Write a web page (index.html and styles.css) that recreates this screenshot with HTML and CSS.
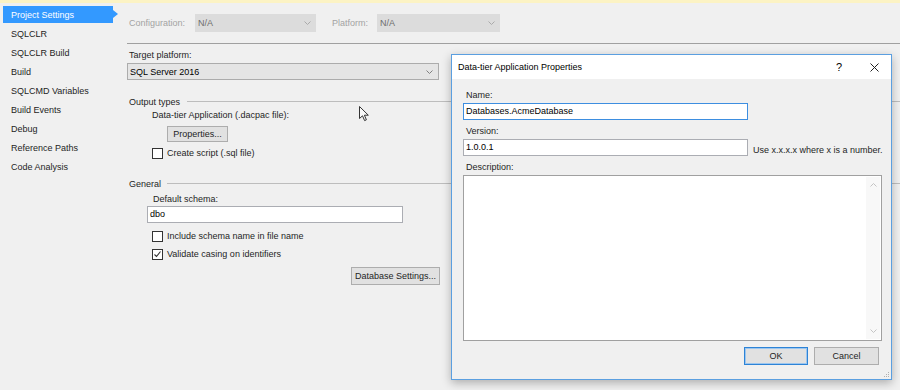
FILE: index.html
```html
<!DOCTYPE html>
<html lang="en">
  <head>
    <meta charset="UTF-8" />
    <title>Project Settings</title>
    <link rel="stylesheet" href="styles.css">
  </head>
  <body>
    <div class="infobar"></div>
    <div class="page">
      <div class="nav">
        <div class="nav-item selected">Project Settings</div>
        <div class="nav-item">SQLCLR</div>
        <div class="nav-item">SQLCLR Build</div>
        <div class="nav-item">Build</div>
        <div class="nav-item">SQLCMD Variables</div>
        <div class="nav-item">Build Events</div>
        <div class="nav-item">Debug</div>
        <div class="nav-item">Reference Paths</div>
        <div class="nav-item">Code Analysis</div>
      </div>

      <div class="main">
        <div class="config-row">
          <span class="muted config-label">Configuration:</span>
          <div class="select disabled config-select">
            <span>N/A</span>
            <svg width="7" height="4" viewBox="0 0 7 4"><polyline points="0.5,0.5 3.5,3.5 6.5,0.5" fill="none" stroke="#aaa"/></svg>
          </div>
          <span class="muted platform-label">Platform:</span>
          <div class="select disabled platform-select">
            <span>N/A</span>
            <svg width="7" height="4" viewBox="0 0 7 4"><polyline points="0.5,0.5 3.5,3.5 6.5,0.5" fill="none" stroke="#aaa"/></svg>
          </div>
        </div>
        <div class="rule"></div>

        <div class="field-label">Target platform:</div>
        <div class="select target-select">
          <span>SQL Server 2016</span>
          <svg width="7" height="4" viewBox="0 0 7 4"><polyline points="0.5,0.5 3.5,3.5 6.5,0.5" fill="none" stroke="#808080"/></svg>
        </div>

        <div class="group-head output-head"><span>Output types</span><div class="group-line"></div></div>
        <div class="sub-label">Data-tier Application (.dacpac file):</div>
        <button class="btn btn-props">Properties...</button>
        <div class="check-row row-script">
          <div class="check"></div><span>Create script (.sql file)</span>
        </div>

        <div class="group-head general-head"><span>General</span><div class="group-line"></div></div>
        <div class="sub-label schema-label">Default schema:</div>
        <div class="text-input schema-input">dbo</div>
        <div class="check-row row-include">
          <div class="check"></div><span>Include schema name in file name</span>
        </div>
        <div class="check-row row-validate">
          <div class="check">
            <svg width="9" height="9" viewBox="0 0 9 9"><polyline points="1.5,4.5 3.5,6.5 7.5,1.5" fill="none" stroke="#333" stroke-width="1.1"/></svg>
          </div><span>Validate casing on identifiers</span>
        </div>
        <button class="btn btn-db">Database Settings...</button>
      </div>
    </div>

    <div class="dialog">
      <div class="dialog-title">
        <span>Data-tier Application Properties</span>
        <span class="help">?</span>
        <svg class="close" width="9" height="9" viewBox="0 0 9 9"><path d="M0.5 0.5L8.5 8.5M8.5 0.5L0.5 8.5" stroke="#222" stroke-width="1"/></svg>
      </div>
      <div class="dialog-body">
        <div class="dlg-label">Name:</div>
        <div class="dlg-input focus">Databases.AcmeDatabase</div>
        <div class="dlg-label gap">Version:</div>
        <div class="version-row">
          <div class="dlg-input">1.0.0.1</div>
          <span class="hint">Use x.x.x.x where x is a number.</span>
        </div>
        <div class="dlg-label gap">Description:</div>
        <div class="textarea">
          <div class="textarea-text"></div>
          <div class="scroll">
            <svg width="7" height="4" viewBox="0 0 7 4"><polyline points="0.5,3.5 3.5,0.5 6.5,3.5" fill="none" stroke="#c4c4c4"/></svg>
            <svg width="7" height="4" viewBox="0 0 7 4"><polyline points="0.5,0.5 3.5,3.5 6.5,0.5" fill="none" stroke="#c4c4c4"/></svg>
          </div>
        </div>
        <div class="dlg-buttons">
          <button class="btn btn-ok">OK</button>
          <button class="btn btn-cancel">Cancel</button>
        </div>
      </div>
      <svg class="grip" width="7" height="7" viewBox="0 0 7 7">
        <rect x="5" y="1" width="1" height="1" fill="#b0b0b0"/>
        <rect x="3" y="3" width="1" height="1" fill="#b0b0b0"/>
        <rect x="5" y="3" width="1" height="1" fill="#b0b0b0"/>
        <rect x="1" y="5" width="1" height="1" fill="#b0b0b0"/>
        <rect x="3" y="5" width="1" height="1" fill="#b0b0b0"/>
        <rect x="5" y="5" width="1" height="1" fill="#b0b0b0"/>
      </svg>
    </div>

    <svg class="cursor" width="11" height="16" viewBox="0 0 11 16">
      <path d="M0.5 0.5 L0.5 12.5 L3.5 9.8 L5.6 14.6 L7.4 13.8 L5.4 9.2 L9.3 9.2 Z" fill="#fafafa" stroke="#333" stroke-width="1" stroke-linejoin="round"/>
    </svg>
  </body>
</html>
```

FILE: styles.css
```css
* {
  box-sizing: border-box;
}

body {
  margin: 0;
  width: 900px;
  height: 390px;
  overflow: hidden;
  position: relative;
  background: #f0f0f0;
  font-family: "Liberation Sans", Arial, sans-serif;
  font-size: 9px;
  color: #1e1e1e;
}

.infobar {
  height: 3px;
  background: #fcf3c4;
}

.page {
  display: flex;
  height: 387px;
}

/* left navigation */
.nav {
  width: 120px;
  flex-shrink: 0;
  padding-top: 3px;
}
.nav-item {
  height: 17px;
  line-height: 18px;
  margin: 0 7px 2px 3px;
  padding-left: 8px;
  white-space: nowrap;
}
.nav-item.selected {
  position: relative;
  background: #3399ff;
  color: #fff;
}
.nav-item.selected::after {
  content: "";
  position: absolute;
  left: 100%;
  top: 4px;
  border-top: 4.5px solid transparent;
  border-bottom: 4.5px solid transparent;
  border-left: 5px solid #3399ff;
}

/* main settings */
.main {
  flex: 1;
  padding-left: 7px;
  display: flex;
  flex-direction: column;
  align-items: flex-start;
}

.muted {
  color: #a3a3a3;
}

.config-row {
  display: flex;
  align-items: center;
  height: 18px;
  margin-top: 11px;
}
.config-label {
  width: 68px;
  padding-left: 2px;
}
.platform-label {
  width: 45px;
  margin-left: 16px;
}

.select {
  display: flex;
  align-items: center;
  justify-content: space-between;
  height: 18px;
  padding: 0 5px 0 3px;
}
.select.disabled {
  background: #dcdcdc;
  color: #6d6d6d;
}
.config-select {
  width: 121px;
}
.platform-select {
  width: 123px;
}

.rule {
  align-self: stretch;
  height: 1px;
  margin-top: 11px;
  background: #a0a0a0;
}

.field-label {
  line-height: 12px;
  padding-left: 2px;
  margin-top: 5px;
}

.target-select {
  width: 312px;
  height: 17px;
  margin-top: 2px;
  background: #e5e5e5;
  border: 1px solid #acacac;
  padding-left: 2px;
  color: #000;
}

.group-head {
  align-self: stretch;
  display: flex;
  align-items: center;
  gap: 7px;
  line-height: 12px;
  padding-left: 2px;
}
.output-head {
  margin-top: 16px;
}
.general-head {
  margin-top: 19px;
  gap: 6px;
}
.group-line {
  flex: 1;
  height: 1px;
  margin-top: -1px;
  background: #bdbdbd;
}

.sub-label {
  line-height: 12px;
  margin-left: 25px;
  margin-top: 1px;
}
.schema-label {
  margin-left: 26px;
  margin-top: 3px;
}

.btn {
  height: 16px;
  padding: 0;
  background: #e1e1e1;
  border: 1px solid #adadad;
  font: inherit;
  color: #1e1e1e;
  text-align: center;
}
.btn-props {
  width: 61px;
  margin-left: 40px;
  margin-top: 5px;
}
.btn-db {
  width: 89px;
  height: 18px;
  margin-left: 224px;
  margin-top: 7px;
}

.check-row {
  display: flex;
  align-items: center;
  gap: 4px;
  line-height: 12px;
  margin-left: 25px;
}
.row-script {
  margin-top: 5px;
}
.row-include {
  margin-top: 7px;
}
.row-validate {
  margin-top: 6px;
}
.check {
  width: 11px;
  height: 11px;
  background: #fff;
  border: 1px solid #333;
  display: flex;
  align-items: center;
  justify-content: center;
}

.text-input {
  height: 17px;
  line-height: 15px;
  padding-left: 2px;
  background: #fff;
  border: 1px solid #abadb3;
  color: #000;
}
.schema-input {
  width: 256px;
  margin-left: 20px;
  margin-top: 1px;
}

/* modal dialog */
.dialog {
  position: absolute;
  left: 451px;
  top: 54px;
  width: 441px;
  height: 326px;
  display: flex;
  flex-direction: column;
  background: #f0f0f0;
  border: 1px solid #5b9fe0;
  box-shadow: 0 3px 9px rgba(0, 0, 0, 0.28);
}

.dialog-title {
  height: 24px;
  display: flex;
  align-items: center;
  padding-left: 6px;
  background: #fff;
  color: #000;
}
.help {
  margin-left: auto;
  font-size: 11px;
}
.close {
  margin-left: 28px;
  margin-right: 12px;
}

.dialog-body {
  flex: 1;
  display: flex;
  flex-direction: column;
  padding: 10px 9px 0 11px;
}
.dlg-label {
  line-height: 12px;
  padding-left: 3px;
}
.dlg-label.gap {
  margin-top: 5px;
}
.dlg-input {
  flex-shrink: 0;
  width: 285px;
  height: 17px;
  line-height: 15px;
  margin-top: 2px;
  padding-left: 2px;
  background: #fff;
  border: 1px solid #abadb3;
  color: #000;
}
.dlg-input.focus {
  border-color: #3d8ee0;
}
.version-row {
  display: flex;
  align-items: flex-end;
  gap: 5px;
}
.hint {
  line-height: 12px;
  white-space: nowrap;
}

.textarea {
  height: 166px;
  margin-top: 2px;
  display: flex;
  background: #fff;
  border: 1px solid #a0a0a0;
}
.textarea-text {
  flex: 1;
}
.scroll {
  width: 14px;
  margin: 1px;
  display: flex;
  flex-direction: column;
  align-items: center;
  justify-content: space-between;
  padding: 6px 0;
  background: #f8f8f8;
}

.dlg-buttons {
  display: flex;
  justify-content: flex-end;
  gap: 6px;
  margin-top: 6px;
  padding-right: 3px;
}
.btn-ok {
  width: 64px;
  height: 18px;
  border-color: #2d83d6;
  box-shadow: inset 0 0 0 1px #9cc6ef;
}
.btn-cancel {
  width: 65px;
  height: 18px;
}

.grip {
  position: absolute;
  right: 1px;
  bottom: 1px;
}

.cursor {
  position: absolute;
  left: 359px;
  top: 106px;
}
```
